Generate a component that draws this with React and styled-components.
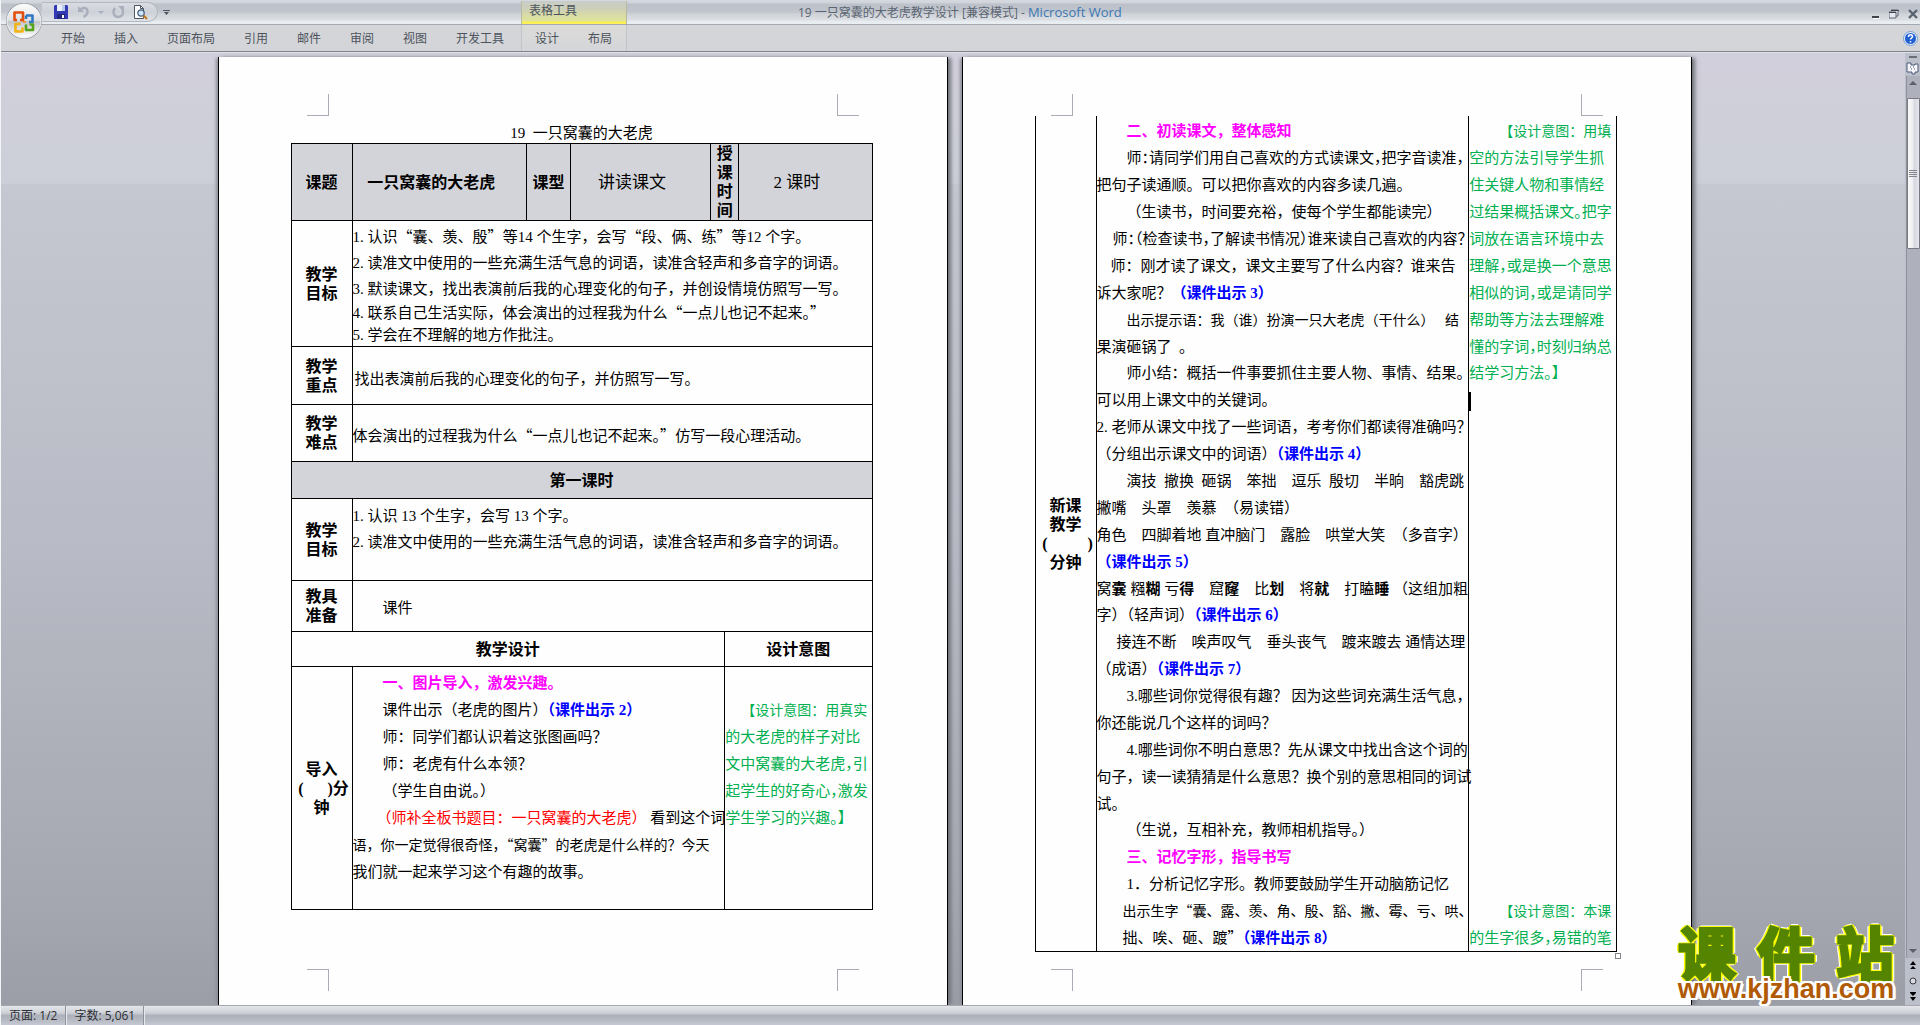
import React from "react"
import styled, { createGlobalStyle, css } from "styled-components"

const palette = {
    ink: "#000000",
    heading: "#ff00ff",
    slide: "#0000ff",
    board: "#ff0000",
    intent: "#00b050",
    shade: "#d3d4d9",
    ribbon: "#d4d5d9",
    ribbon_text: "#4c535c",
    mark: "#a9abb5",
}

const ui_font = `"Open Sans", "Noto Sans CJK SC", sans-serif`
const body_font = `"Liberation Serif", "Noto Sans CJK SC", serif`
const cjk_font = `"Noto Sans CJK SC", sans-serif`

const GlobalStyle = createGlobalStyle`
    * { box-sizing: border-box; }
    body { margin: 0; }
    button { font: inherit; color: inherit; background: none; border: 0; padding: 0; }
`

const Window = styled.div`
    display: flex;
    flex-direction: column;
    height: 100vh;
    min-height: 1025px;
    overflow: hidden;
    border-left: 1px solid #f4f5f7;
    font: 12px/16px ${ui_font};
    color: ${palette.ribbon_text};
    background: #c8cad3;
`

/* ---- title bar and ribbon ---- */

const Top = styled.header`
    display: grid;
    grid-template-columns: 520px 106px 1fr;
    grid-template-rows: 25px 28px;
    flex-shrink: 0;
    position: relative;
    background:
        linear-gradient(#d6dae0 0, #cfd3da 3px, #bcc1c9 4px, #c1c5cd 12px, #cfd2d7 14px, #dcdfe3 20px, #e6ebf0 21px, #e9eef3 24px, #a4a8b0 24px, #a4a8b0 25px, ${palette.ribbon} 25px, ${palette.ribbon} 51px, #7e838e 51px, #7e838e 52px, #e0e1e7 52px);
`

const QuickBar = styled.div`
    display: flex;
    align-items: center;
    align-self: start;
    height: 20px;
    width: 116px;
    margin: 2px 0 0 41px;
    padding-left: 12px;
    gap: 8px;
    border: 1px solid #b3b8c1;
    border-left: 0;
    border-radius: 0 11px 11px 0;
    background: linear-gradient(#d9dce2, #cdd1d8 50%, #dfe2e6);
`

const QuickRow = styled.div`
    display: flex;
    gap: 5px;
`

const IconButton = styled.button`
    display: block;
    line-height: 0;
    svg { display: block; }
`

const OfficeButton = styled(IconButton)`
    position: absolute;
    left: 4px;
    top: 2px;
`

const ContextTitle = styled.div`
    padding: 2px 0 0 7px;
    margin: 1px 0;
    border: 0 solid #b9bb9f;
    border-width: 0 1px;
    background: linear-gradient(#c9cdc9 0, #cdd0b8 8px, #d8dba6 14px, #dfe39a 20px, #fbf04a 21px, #fdf264 23px);
`

const TitleRow = styled.div`
    display: flex;
    justify-content: space-between;
    padding-left: 171px;
    line-height: 25px;
    color: #5b6572;

    span
    {
        font-size: 13px;
        color: #3b78b4;
    }
`

const WindowButtons = styled.div`
    display: flex;
    gap: 9px;
    padding: 3px 2px 0 0;
`

const Tabs = styled.nav`
    display: flex;
    gap: 29px;
    padding: 1px 0 0 60px;
    height: 26px;
    align-items: center;
`

const ContextTabs = styled(Tabs)`
    padding-left: 13px;
    border: 0 solid #c2c4ca;
    border-width: 0 1px;
    background: linear-gradient(#dbdcd8, ${palette.ribbon});
`

const TabButton = styled.button`
    white-space: nowrap;
    line-height: 25px;
`

const HelpCell = styled.div`
    display: flex;
    justify-content: flex-end;
    align-items: center;
    height: 26px;
    padding-right: 2px;
`

/* ---- document area ---- */

const Workspace = styled.main`
    flex: 1;
    display: flex;
    min-height: 0;
    background: linear-gradient(#d1cfdb 0, #cccfd8 130px, #c5c8d0 132px, #b9bcc6 50%, #a5a8b0 88%, #9b9ea6 100%);
`

const Desk = styled.div`
    flex: 1;
    display: flex;
    justify-content: center;
    gap: 14px;
    padding: 4px 0 0 3px;
`

const Page = styled.article`
    display: flex;
    flex-direction: column;
    width: 730px;
    padding-bottom: 14px;
    background: #fefefe;
    border: solid #000;
    border-width: 0 1px;
    box-shadow: 4px 0 4px -1px #6f7279, -3px 0 3px -1px #8b8e96;
    color: ${palette.ink};
    font: 15px/27px ${body_font};
`

const Marks = styled.div`
    display: flex;
    justify-content: space-between;
    padding: ${props => props.$bottom ? "0 88px" : "37px 88px 0"};

    i
    {
        width: 22px;
        height: 22px;
        border: 0 solid ${palette.mark};
        border-width: ${props => props.$bottom ? "1px 1px 0 0" : "0 1px 1px 0"};
    }

    i:last-child
    {
        border-width: ${props => props.$bottom ? "1px 0 0 1px" : "0 0 1px 1px"};
    }
`

const Content = styled.div`
    flex: 1;
    padding: 0 74px 0 72px;
`

const DocTitle = styled.h1`
    margin: 0;
    padding-top: 7px;
    font: inherit;
    line-height: 20px;
    text-align: center;
    white-space: pre;
`

const Plan = styled.table`
    width: 100%;
    table-layout: fixed;
    border-collapse: collapse;
    border: 1px solid #000;
    ${props => props.$continued && css`border-top: 0;`}
`

const Row = styled.tr`
    height: ${props => props.$height}px;
`

const Cell = styled.td`
    padding: ${props => props.$top || 0}px 0 0 0;
    border: 1px solid #000;
    vertical-align: ${props => props.$valign || "middle"};
    white-space: pre;
    ${props => props.$continued && css`border-top: 0;`}
    ${props => props.$shade && css`background: ${palette.shade};`}
    ${props => props.$large && css`
        font-size: 17px;
        text-align: center;
    `}
`

const Label = styled.th`
    padding: 0;
    border: 1px solid #000;
    font: bold 16px/19px ${body_font};
    text-align: center;
    white-space: pre;
    ${props => props.$continued && css`border-top: 0;`}
    ${props => props.$shade && css`background: ${palette.shade};`}
`

const Line = styled.p`
    margin: 0;
    height: ${props => props.$h || 27}px;
    line-height: ${props => props.$h || 27}px;
    padding-left: ${props => props.$indent || 0}px;
    white-space: pre;
    ${props => props.$tight && css`font-size: 14px;`}
    ${props => props.$half && css`font-feature-settings: "halt";`}
`

const Intent = styled.div`
    color: ${palette.intent};
`

const Heading = styled.b`
    color: ${palette.heading};
`

const Slide = styled.b`
    color: ${palette.slide};
`

const Board = styled.span`
    color: ${palette.board};
`

const Cjk = styled.span`
    font-family: ${cjk_font};
    line-height: 0;
`

const Caret = styled.span`
    display: inline-block;
    vertical-align: middle;
    width: 2px;
    height: 19px;
    background: #000;
`

const Handle = styled.div`
    width: 6px;
    height: 6px;
    margin: 1px -4px 0 auto;
    border: 1px solid #84868e;
`

/* ---- scroll bar and status bar ---- */

const Scroll = styled.aside`
    display: flex;
    flex-direction: column;
    align-items: center;
    width: 15px;
    padding-top: 3px;
    background: #bcc0cb;
`

const Split = styled.div`
    width: 8px;
    height: 2px;
    margin-bottom: 3px;
    background: #6b6e76;
`

const Track = styled.div`
    flex: 1;
    display: flex;
    flex-direction: column;
    justify-content: space-between;
    align-items: center;
    width: 14px;
    margin-top: 1px;
    padding: 5px 0;
    border-left: 1px solid #8f929b;
    background: #aeb1bb;
`

const Center = styled.div`
    display: flex;
    justify-content: center;
`

const Thumb = styled.div`
    display: flex;
    align-items: center;
    justify-content: center;
    width: 13px;
    height: 151px;
    margin-top: 13px;
    border: 1px solid #777a83;
    border-radius: 1px;
    background: linear-gradient(90deg, #fbfaf6, #eeeef2 45%, #d5d6df 55%, #e6e7ec);
`

const Browse = styled.div`
    display: flex;
    flex-direction: column;
    align-items: center;
    gap: 7px;
    padding: 3px 0 4px;
`

const Status = styled.footer`
    display: flex;
    flex-shrink: 0;
    height: 20px;
    border-top: 1px solid #a5a8ae;
    background: linear-gradient(#e4e6ea 0, #d4d7dc 5px, #c6c9d0 8px, #acb0b9 9px, #b3b7c0 13px, #c5c8d2 19px);
    color: #2c2f35;
`

const StatusItem = styled.button`
    padding: 0 8px;
    line-height: 19px;
    border-right: 1px solid #8f929a;
    box-shadow: 1px 0 0 #e6e8ec;
`

/* ---- site stamp over the page corner ---- */

const Stamp = styled.div`
    position: absolute;
    right: 20px;
    bottom: 23px;
    width: 228px;
`

const StampName = styled.div`
    display: flex;
    justify-content: space-between;
    padding: 0 6px;
    font: bold 58px/50px ${cjk_font};
    color: #548400;
    -webkit-text-stroke: 3px #548400;
    text-shadow:
        3px 0 #ff0, -3px 0 #ff0, 0 2px #ff0, 0 -2px #ff0,
        2px 2px #ff0, -2px 2px #ff0, 2px -2px #ff0, -2px -2px #ff0,
        4px 0 #fff, -4px 0 #fff, 0 3px #fff, 0 -3px #fff;
`

const StampSite = styled.div`
    font: bold 27px/26px "Liberation Sans", sans-serif;
    text-align: center;
    color: #b05a06;
    text-shadow:
        2px 0 #fff, -2px 0 #fff, 0 2px #fff, 0 -2px #fff,
        2px 2px #fff, -2px 2px #fff, 2px -2px #fff, -2px -2px #fff,
        3px 1px #fff, -3px 1px #fff;
`

const OfficeLogo = () => (
    <svg width="38" height="38" viewBox="0 0 38 38">
        <defs>
            <linearGradient id="orb" x1="0" y1="0" x2="0" y2="1">
                <stop offset="0" stopColor="#fdfdfd" />
                <stop offset="0.48" stopColor="#dfe0e3" />
                <stop offset="0.52" stopColor="#c3c5ca" />
                <stop offset="1" stopColor="#ffffff" />
            </linearGradient>
        </defs>
        <circle cx="19" cy="19" r="18" fill="#8d9199" />
        <circle cx="19" cy="19" r="17" fill="url(#orb)" stroke="#f3f4f6" />
        <g fill="none" strokeWidth="2.6" strokeLinejoin="round">
            <path d="M12 18H9.500V10.500H18V18H15" stroke="#e2500f" />
            <path d="M21 13.500H27.500V20H24M21 13.500V17" stroke="#2f78c4" />
            <path d="M15.500 22H10.500V29.500H17.500V25.500" stroke="#f2b211" />
            <path d="M21 22.500V28H28V22.500H24.500" stroke="#57a31b" />
            <path d="M17.500 19.800H21" stroke="#f08a24" strokeWidth="1.600" />
        </g>
    </svg>
)

const SaveIcon = () => (
    <svg width="14" height="14" viewBox="0 0 14 14">
        <path d="M1 0h12l1 1v13H0V1z" fill="#3338b4" />
        <path d="M3 0h8v6H3z" fill="#e9effa" />
        <path d="M8 0h3v6H8z" fill="#b9c9ea" />
        <path d="M3 9h8v5H3z" fill="#23267e" />
        <path d="M8 10h2v3H8z" fill="#fff" />
    </svg>
)

const UndoIcon = () => (
    <svg width="14" height="14" viewBox="0 0 14 14">
        <path d="M2 1v6h6z" fill="#a9afbd" />
        <path d="M4 5C6 2 12 2 11.500 7c-.2 3-2 4-4 5" fill="none" stroke="#a9afbd" strokeWidth="2.400" />
    </svg>
)

const RedoIcon = () => (
    <svg width="13" height="14" viewBox="0 0 13 14">
        <path d="M3 3C0 7 2 12 6 12s6-3 4.500-7.500" fill="none" stroke="#a9afbd" strokeWidth="2.400" />
        <path d="M6 1h6v6z" fill="#a9afbd" />
    </svg>
)

const PreviewIcon = () => (
    <svg width="15" height="15" viewBox="0 0 15 15">
        <path d="M1.500 .5h6l3 3v10h-9z" fill="#fff" stroke="#4c5563" />
        <path d="M7.500 .5v3h3" fill="none" stroke="#4c5563" />
        <circle cx="8" cy="8" r="3.200" fill="#cfe4f7" stroke="#3c5878" strokeWidth="1.200" />
        <path d="M10.500 10.500l3.500 3.500" stroke="#c4761d" strokeWidth="2" />
    </svg>
)

const Arrow = ({ up, color = "#5a5f68", size = 8 }) => (
    <svg width={size} height={size / 2} viewBox="0 0 8 4">
        <path d={up ? "M0 4l4-4 4 4z" : "M0 0h8L4 4z"} fill={color} />
    </svg>
)

const DoubleArrow = ({ down }) => (
    <svg width="8" height="9" viewBox="0 0 8 9">
        <path
            d={down ? "M1 0h6v1H5l2 0-3 3-3-3zM1 5h6L4 9z" : "M1 4h6L4 0zM1 8h6L4 5z"}
            fill="#000"
        />
    </svg>
)

function Ribbon() {
    const tabs = ["开始", "插入", "页面布局", "引用", "邮件", "审阅", "视图", "开发工具"]
    return (
        <Top>
            <QuickRow>
                <QuickBar>
                    <IconButton title="保存"><SaveIcon /></IconButton>
                    <IconButton title="撤消"><UndoIcon /></IconButton>
                    <Arrow color="#a9afbd" size={6} />
                    <IconButton title="恢复"><RedoIcon /></IconButton>
                    <IconButton title="打印预览"><PreviewIcon /></IconButton>
                </QuickBar>
                <IconButton title="自定义">
                    <svg width="7" height="6" viewBox="0 0 7 6">
                        <path d="M0 0h7v1H0zM1 2h5L3.500 5z" fill="#4c535c" />
                    </svg>
                </IconButton>
            </QuickRow>
            <ContextTitle>表格工具</ContextTitle>
            <TitleRow>
                <div>19 一只窝囊的大老虎教学设计 [兼容模式] - <span>Microsoft Word</span></div>
                <WindowButtons>
                    <IconButton title="最小化">
                        <svg width="8" height="10" viewBox="0 0 8 10">
                            <path d="M0 7h7v2H0z" fill="#3f434b" />
                            <path d="M1 9h7v1H1z" fill="#fff" />
                        </svg>
                    </IconButton>
                    <IconButton title="还原">
                        <svg width="10" height="10" viewBox="0 0 10 10">
                            <path d="M2 1h7v6H7M0 3h7v6H0z" fill="#e5e8ee" stroke="#5c6470" />
                            <path d="M2 1h8v1H2zM0 3h7v1H0z" fill="#3f434b" />
                        </svg>
                    </IconButton>
                    <IconButton title="关闭">
                        <svg width="10" height="10" viewBox="0 0 10 10">
                            <path d="M1 1l8 8M9 1L1 9" stroke="#59626f" strokeWidth="2.400" />
                        </svg>
                    </IconButton>
                </WindowButtons>
            </TitleRow>
            <Tabs>
                {tabs.map(tab => <TabButton key={tab}>{tab}</TabButton>)}
            </Tabs>
            <ContextTabs>
                <TabButton>设计</TabButton>
                <TabButton>布局</TabButton>
            </ContextTabs>
            <HelpCell>
                <IconButton title="帮助">
                    <svg width="15" height="15" viewBox="0 0 15 15">
                        <circle cx="7.500" cy="7.500" r="7" fill="#dfe9f8" stroke="#7c9fd0" />
                        <circle cx="7.500" cy="7.500" r="5.500" fill="#1f5fd0" />
                        <path d="M5.500 6c0-3 4-2.600 4-.4 0 1.400-2 1.400-2 3M7.500 10v1.500" fill="none" stroke="#fff" strokeWidth="1.500" />
                    </svg>
                </IconButton>
            </HelpCell>
            <OfficeButton title="Office 按钮"><OfficeLogo /></OfficeButton>
        </Top>
    )
}

function FirstPage() {
    return (
        <Page>
            <Marks><i /><i /></Marks>
            <Content>
                <DocTitle>19  一只窝囊的大老虎</DocTitle>
                <Plan>
                    <colgroup>
                        {[61, 174, 44, 140, 14, 14, 133].map((w, i) => <col key={i} width={w} />)}
                    </colgroup>
                    <tbody>
                        <Row $height={77}>
                            <Label $shade>课题</Label>
                            <Label $shade>{"一只窝囊的大老虎    "}</Label>
                            <Label $shade>课型</Label>
                            <Cell $shade $large>{"讲读课文    "}</Cell>
                            <Label $shade colSpan={2}>{"授\n课\n时\n间"}</Label>
                            <Cell $shade $large>{"2 课时    "}</Cell>
                        </Row>
                        <Row $height={126}>
                            <Label>{"教学\n目标"}</Label>
                            <Cell colSpan={6} $valign="bottom">
                                <Line $h={26}>1. 认识<Cjk>“囊、羡、殷”</Cjk>等14 个生字，会写<Cjk>“段、俩、练”</Cjk>等12 个字。</Line>
                                <Line $h={26}>2. 读准文中使用的一些充满生活气息的词语，读准含轻声和多音字的词语。</Line>
                                <Line $h={26}>3. 默读课文，找出表演前后我的心理变化的句子，并创设情境仿照写一写。</Line>
                                <Line $h={22}>4. 联系自己生活实际，体会演出的过程我为什么<Cjk>“一点儿也记不起来。”</Cjk></Line>
                                <Line $h={22}>5. 学会在不理解的地方作批注。</Line>
                            </Cell>
                        </Row>
                        <Row $height={58}>
                            <Label>{"教学\n重点"}</Label>
                            <Cell colSpan={6} $top={8}>
                                <Line $indent={2}>找出表演前后我的心理变化的句子，并仿照写一写。</Line>
                            </Cell>
                        </Row>
                        <Row $height={57}>
                            <Label>{"教学\n难点"}</Label>
                            <Cell colSpan={6} $top={6}>
                                <Line>体会演出的过程我为什么<Cjk>“一点儿也记不起来。”</Cjk>仿写一段心理活动。</Line>
                            </Cell>
                        </Row>
                        <Row $height={37}>
                            <Label $shade colSpan={7}>第一课时</Label>
                        </Row>
                        <Row $height={82}>
                            <Label>{"教学\n目标"}</Label>
                            <Cell colSpan={6} $valign="top" $top={4}>
                                <Line $h={26}>1. 认识 13 个生字，会写 13 个字。</Line>
                                <Line $h={26}>2. 读准文中使用的一些充满生活气息的词语，读准含轻声和多音字的词语。</Line>
                            </Cell>
                        </Row>
                        <Row $height={51}>
                            <Label>{"教具\n准备"}</Label>
                            <Cell colSpan={6} $top={4}>
                                <Line $indent={30}>课件</Line>
                            </Cell>
                        </Row>
                        <Row $height={35}>
                            <Label colSpan={5}>教学设计</Label>
                            <Label colSpan={2}>设计意图</Label>
                        </Row>
                        <Row $height={243}>
                            <Label>{"导入\n (      )分\n钟"}</Label>
                            <Cell colSpan={4} $valign="top" $top={3}>
                                <Line $indent={30}><Heading>一、图片导入，激发兴趣。</Heading></Line>
                                <Line $indent={30}>课件出示（老虎的图片）<Slide>（课件出示 2）</Slide></Line>
                                <Line $indent={30}>师：同学们都认识着这张图画吗？</Line>
                                <Line $indent={30}>师：老虎有什么本领？</Line>
                                <Line $indent={30}>（学生自由说。）</Line>
                                <Line $indent={24}><Board>（师补全板书题目：一只窝囊的大老虎）</Board> 看到这个词</Line>
                                <Line $tight>语，你一定觉得很奇怪，<Cjk>“窝囊”</Cjk>的老虎是什么样的？今天</Line>
                                <Line>我们就一起来学习这个有趣的故事。</Line>
                            </Cell>
                            <Cell colSpan={2} $valign="top" $top={3}>
                                <Intent>
                                    <Line />
                                    <Line $tight $indent={16}>【设计意图：用真实</Line>
                                    <Line>的大老虎的样子对比</Line>
                                    <Line $half>文中窝囊的大老虎，引</Line>
                                    <Line $half>起学生的好奇心，激发</Line>
                                    <Line>学生学习的兴趣。】</Line>
                                </Intent>
                            </Cell>
                        </Row>
                    </tbody>
                </Plan>
            </Content>
            <Marks $bottom><i /><i /></Marks>
        </Page>
    )
}

function SecondPage() {
    return (
        <Page>
            <Marks><i /><i /></Marks>
            <Content>
                <Plan $continued>
                    <colgroup>
                        {[61, 372, 147].map((w, i) => <col key={i} width={w} />)}
                    </colgroup>
                    <tbody>
                        <Row $height={834}>
                            <Label $continued>{"新课\n教学\n (          )\n分钟"}</Label>
                            <Cell $continued $valign="top" $top={2}>
                                <Line $indent={30}><Heading>二、初读课文，整体感知</Heading></Line>
                                <Line $indent={30} $half>师：请同学们用自己喜欢的方式读课文，把字音读准，</Line>
                                <Line>把句子读通顺。可以把你喜欢的内容多读几遍。</Line>
                                <Line $indent={30}>（生读书，时间要充裕，使每个学生都能读完）</Line>
                                <Line $indent={16} $half>师：（检查读书，了解读书情况）谁来读自己喜欢的内容？</Line>
                                <Line $indent={14}>师：刚才读了课文，课文主要写了什么内容？谁来告</Line>
                                <Line>诉大家呢？<Slide>（课件出示 3）</Slide></Line>
                                <Line $indent={30} $tight>出示提示语：我（谁）扮演一只大老虎（干什么）   结</Line>
                                <Line $h={26}>果演砸锅了  。</Line>
                                <Line $indent={30}>师小结：概括一件事要抓住主要人物、事情、结果。</Line>
                                <Line>可以用上课文中的关键词。</Line>
                                <Line>2. 老师从课文中找了一些词语，考考你们都读得准确吗？</Line>
                                <Line>（分组出示课文中的词语）<Slide>（课件出示 4）</Slide></Line>
                                <Line $indent={30}>演技  撤换  砸锅　笨拙　逗乐  殷切　半晌　豁虎跳</Line>
                                <Line>撇嘴　头罩　羡慕  （易读错）</Line>
                                <Line>角色　四脚着地 直冲脑门　露脸　哄堂大笑　（多音字）</Line>
                                <Line><Slide>（课件出示 5）</Slide></Line>
                                <Line $h={26}>窝<b>囊</b> 糨<b>糊</b> 亏<b>得</b>　窟<b>窿</b>　比<b>划</b>　将<b>就</b>　打瞌<b>睡</b> （这组加粗</Line>
                                <Line>字）（轻声词）<Slide>（课件出示 6）</Slide></Line>
                                <Line $indent={20}>接连不断　唉声叹气　垂头丧气　踱来踱去 通情达理</Line>
                                <Line>（成语）<Slide>（课件出示 7）</Slide></Line>
                                <Line $indent={30}>3.哪些词你觉得很有趣？ 因为这些词充满生活气息，</Line>
                                <Line>你还能说几个这样的词吗？</Line>
                                <Line $indent={30}>4.哪些词你不明白意思？先从课文中找出含这个词的</Line>
                                <Line>句子，读一读猜猜是什么意思？换个别的意思相同的词试</Line>
                                <Line $h={26}>试。</Line>
                                <Line $indent={30}>（生说，互相补充，教师相机指导。）</Line>
                                <Line $indent={30}><Heading>三、记忆字形，指导书写</Heading></Line>
                                <Line $indent={30}>1．分析记忆字形。教师要鼓励学生开动脑筋记忆</Line>
                                <Line $indent={26} $tight>出示生字<Cjk>“囊、露、羡、角、殷、豁、撇、霉、亏、哄、</Cjk></Line>
                                <Line $h={26} $indent={26}>拙、唉、砸、踱<Cjk>”</Cjk><Slide>（课件出示 8）</Slide></Line>
                            </Cell>
                            <Cell $continued $valign="top" $top={2}>
                                <Intent>
                                    <Line $indent={30} $tight>【设计意图：用填</Line>
                                    <Line>空的方法引导学生抓</Line>
                                    <Line>住关键人物和事情经</Line>
                                    <Line $half>过结果概括课文。把字</Line>
                                    <Line>词放在语言环境中去</Line>
                                    <Line $half>理解，或是换一个意思</Line>
                                    <Line $half>相似的词，或是请同学</Line>
                                    <Line>帮助等方法去理解难</Line>
                                    <Line $half $h={26}>懂的字词，时刻归纳总</Line>
                                    <Line>结学习方法。】</Line>
                                    <Line><Caret /></Line>
                                    {Array.from({ length: 6 }, (_, i) => <Line key={i} />)}
                                    <Line $h={26} />
                                    {Array.from({ length: 7 }, (_, i) => <Line key={i} />)}
                                    <Line $h={26} />
                                    {Array.from({ length: 3 }, (_, i) => <Line key={i} />)}
                                    <Line $indent={30} $tight>【设计意图：本课</Line>
                                    <Line $half $h={26}>的生字很多，易错的笔</Line>
                                </Intent>
                            </Cell>
                        </Row>
                    </tbody>
                </Plan>
                <Handle />
            </Content>
            <Marks $bottom><i /><i /></Marks>
        </Page>
    )
}

function ScrollBar() {
    return (
        <Scroll>
            <Split />
            <IconButton title="标尺">
                <svg width="13" height="14" viewBox="0 0 13 14">
                    <path d="M1 2h4v2h4v-1h3v8h-3v2H6v-2H1z" fill="#f4f6fa" stroke="#4a5878" />
                    <path d="M4 6h1M7 6h1M5 8h1M8 8h1" stroke="#4a5878" />
                </svg>
            </IconButton>
            <Track>
                <div>
                    <Center><Arrow up /></Center>
                    <Thumb>
                        <svg width="8" height="7" viewBox="0 0 8 7">
                            <path d="M0 .5h8M0 2.500h8M0 4.500h8M0 6.500h8" stroke="#83868e" />
                        </svg>
                    </Thumb>
                </div>
                <Arrow />
            </Track>
            <Browse>
                <IconButton title="前一页"><DoubleArrow /></IconButton>
                <IconButton title="选择浏览对象">
                    <svg width="8" height="8" viewBox="0 0 8 8">
                        <circle cx="4" cy="4" r="3" fill="#d9dbe0" stroke="#33363c" />
                    </svg>
                </IconButton>
                <IconButton title="下一页"><DoubleArrow down /></IconButton>
            </Browse>
        </Scroll>
    )
}

class App extends React.Component {
    render() {
        return (
            <Window>
                <GlobalStyle />
                <Ribbon />
                <Workspace>
                    <Desk>
                        <FirstPage />
                        <SecondPage />
                    </Desk>
                    <ScrollBar />
                </Workspace>
                <Status>
                    <StatusItem>页面: 1/2</StatusItem>
                    <StatusItem>字数: 5,061</StatusItem>
                </Status>
                <Stamp>
                    <StampName><span>课</span><span>件</span><span>站</span></StampName>
                    <StampSite>www.kjzhan.com</StampSite>
                </Stamp>
            </Window>
        )
    }
}

export default App
